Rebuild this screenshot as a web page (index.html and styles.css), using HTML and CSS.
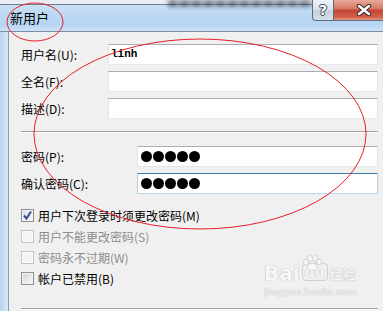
FILE: index.html
```html
<!DOCTYPE html>
<html lang="zh-CN">
<head>
    <meta charset="UTF-8">
    <title>新用户</title>
    <link rel="stylesheet" href="styles.css">
</head>
<body>
    <div class="window">
        <div class="titlebar">
            <div class="ghost"></div>
            <span class="title">新用户</span>
            <div class="caption-btns">
                <div class="cap help">?</div>
                <div class="cap close">
                    <svg width="18" height="12" viewBox="0 0 18 12">
                        <path d="M4 2 L14 10 M14 2 L4 10" stroke="#3b2a2a" stroke-width="4.5" stroke-linecap="round"/>
                        <path d="M4 2 L14 10 M14 2 L4 10" stroke="#fff" stroke-width="2.5" stroke-linecap="round"/>
                    </svg>
                </div>
            </div>
        </div>
        <div class="frame">
            <div class="side"></div>
            <div class="client">
                <div class="fields">
                    <label>用户名(U):</label>
                    <div class="field">linh</div>
                    <label>全名(F):</label>
                    <div class="field"></div>
                    <label>描述(D):</label>
                    <div class="field"></div>
                </div>
                <div class="sep"></div>
                <div class="fields pwd">
                    <label>密码(P):</label>
                    <div class="field"><span class="dot"></span><span class="dot"></span><span class="dot"></span><span class="dot"></span><span class="dot"></span></div>
                    <label>确认密码(C):</label>
                    <div class="field focus"><span class="dot"></span><span class="dot"></span><span class="dot"></span><span class="dot"></span><span class="dot"></span></div>
                </div>
                <ul class="checks">
                    <li><span class="box checked">
                        <svg width="11" height="11" viewBox="0 0 11 11"><path d="M2 5.5 L4.5 8.5 L9 1.5" fill="none" stroke="#3a4f8c" stroke-width="2"/></svg>
                    </span>用户下次登录时须更改密码(M)</li>
                    <li class="disabled"><span class="box"></span>用户不能更改密码(S)</li>
                    <li class="disabled"><span class="box"></span>密码永不过期(W)</li>
                    <li><span class="box"></span>帐户已禁用(B)</li>
                </ul>
                <div class="sep bottom"></div>
            </div>
        </div>

        <div class="watermark">
            <div class="wm-logo">
                <span class="wm-bai">Bai</span>
                <span class="wm-paw">
                    <svg width="20" height="16" viewBox="0 0 20 16">
                        <g fill="#f8f8f8" stroke="#d2d2d2" stroke-width="1">
                            <ellipse cx="4" cy="7" rx="2.5" ry="3"/>
                            <ellipse cx="8" cy="3.5" rx="2.5" ry="3"/>
                            <ellipse cx="13" cy="3.5" rx="2.5" ry="3"/>
                            <ellipse cx="17" cy="7" rx="2.5" ry="3"/>
                            <ellipse cx="10.5" cy="12" rx="4.5" ry="3.5"/>
                        </g>
                    </svg>
                </span>
                <span class="wm-du">du</span>
                <span class="wm-jy">经验</span>
            </div>
            <div class="wm-url">jingyan.baidu.com</div>
        </div>

        <svg class="marks" width="383" height="311" viewBox="0 0 383 311">
            <ellipse cx="35" cy="22" rx="28" ry="19" fill="none" stroke="#e61e28" stroke-width="1"/>
            <ellipse cx="200" cy="134" rx="166" ry="95" fill="none" stroke="#e61e28" stroke-width="1"/>
        </svg>
    </div>
</body>
</html>
```

FILE: styles.css
```css
body {
    margin: 0;
    font-family: "Noto Sans CJK SC", "Noto Sans", sans-serif;
    font-size: 12px;
    color: #000;
    background: #f0f0f0;
}
.window {
    position: relative;
    width: 383px;
    height: 311px;
    overflow: hidden;
    display: flex;
    flex-direction: column;
}
.titlebar {
    position: relative;
    height: 31px;
    display: flex;
    align-items: flex-start;
    background:
        linear-gradient(to bottom, #e9eef3 0 4px, #6d8097 4px 5px, transparent 5px),
        linear-gradient(to bottom, #d3e5f7 0%, #bdd9f4 45%, #b7d5f2 80%, #cfe2f6 100%);
    border-bottom: 1px solid #7b8da3;
}
/* blurred background seen through the glass */
.ghost {
    position: absolute;
    left: 168px;
    top: 0;
    width: 145px;
    height: 7px;
    background: repeating-linear-gradient(to right, #2a3440 0 9px, #8b97a4 9px 12px);
    filter: blur(2px);
    opacity: 0.6;
}
.title {
    position: relative;
    margin: 10px 0 0 10px;
    font-size: 13px;
    line-height: 16px;
}
.caption-btns {
    position: relative;
    display: flex;
    margin-left: auto;
    margin-right: -12px;
}
.cap {
    height: 20px;
    border: 1px solid #5d6e84;
    border-top: none;
    display: flex;
    align-items: center;
    justify-content: center;
}
.help {
    width: 20px;
    border-radius: 0 0 0 4px;
    background: linear-gradient(to bottom, #edf2f7 0%, #d9e2ec 50%, #c3d0df 51%, #d6e0ea 100%);
    font-family: "DejaVu Sans", sans-serif;
    font-weight: bold;
    font-size: 14px;
    color: #fff;
    text-shadow: 1px 0 0 #3d4a5a, -1px 0 0 #3d4a5a, 0 1px 0 #3d4a5a, 0 -1px 0 #3d4a5a;
    border-right: none;
}
.close {
    width: 60px;
    background: linear-gradient(to bottom, #e9a99c 0%, #d47763 45%, #c24533 50%, #d0604a 85%, #e69a86 100%);
    border-radius: 0 0 4px 0;
}
.frame {
    flex: 1;
    display: flex;
}
.side {
    width: 8px;
    background: linear-gradient(to right, #b9d3ed 0%, #c6dcf2 40%, #d8e7f6 100%);
}
.client {
    flex: 1;
    border-left: 1px solid #8a9cb1;
    padding: 12px 5px 0 12px;
}
.fields {
    display: grid;
    grid-template-columns: 87px 1fr;
    row-gap: 6px;
    align-items: center;
}
.fields.pwd {
    grid-template-columns: 116px 1fr;
    margin-top: 13px;
}
label {
    line-height: 21px;
    white-space: nowrap;
}
.field {
    height: 19px;
    background: #fff;
    border: 1px solid;
    border-color: #abadb3 #e2e3ea #e3e9ef #e2e3ea;
    padding-left: 2px;
    line-height: 19px;
    display: flex;
    align-items: center;
    font-family: "Liberation Mono", "DejaVu Sans Mono", monospace;
    font-weight: bold;
    font-size: 11px;
}
.field.focus {
    border-color: #3d7bad #b5cfe7 #b7d9ed #b5cfe7;
}
.pwd .field {
    padding-left: 3px;
}
.dot {
    width: 11px;
    height: 11px;
    border-radius: 50%;
    background: #000;
    margin-right: 1px;
    margin-top: -1px;
}
.sep {
    height: 1px;
    background: #a0a0a0;
    border-bottom: 1px solid #fff;
    margin-top: 12px;
}
.sep.bottom {
    margin-top: 19px;
}
.checks {
    list-style: none;
    margin: 11px 0 0;
    padding: 0;
}
.checks li {
    height: 21px;
    line-height: 21px;
    display: flex;
    align-items: center;
}
.box {
    width: 11px;
    height: 11px;
    border: 1px solid #8e8f8f;
    margin-right: 4px;
    background: linear-gradient(135deg, #d2d2d2 0%, #e9e9e9 60%, #f8f8f8 100%);
    box-shadow: inset 0 0 0 1px #f4f4f4;
    display: flex;
    align-items: center;
    justify-content: center;
}
.box.checked {
    background: linear-gradient(135deg, #d8dce3 0%, #eef0f4 60%, #fafafa 100%);
}
.disabled {
    color: #8d8d8d;
}
.disabled .box {
    border-color: #c4c4c4;
    background: #f4f4f4;
    box-shadow: inset 0 0 0 1px #fbfbfb;
}
.watermark {
    position: absolute;
    left: 264px;
    top: 254px;
    color: #f8f8f8;
    text-shadow: 0 0 1px #b8b8b8, 0 0 1px #b8b8b8;
}
.wm-logo {
    display: flex;
    align-items: flex-end;
    height: 30px;
}
.wm-bai {
    font-family: "DejaVu Sans", sans-serif;
    font-weight: bold;
    font-size: 20px;
    line-height: 22px;
}
.wm-paw {
    position: relative;
}
.wm-paw svg {
    position: absolute;
    left: 2px;
    top: -29px;
}
.wm-du {
    font-family: "DejaVu Sans", sans-serif;
    font-weight: bold;
    font-size: 14px;
    line-height: 16px;
    padding: 0 2px;
    border: 1px solid #cfcfcf;
    border-radius: 4px;
    margin: 0 2px 3px 2px;
}
.wm-jy {
    font-size: 13px;
    font-weight: bold;
    line-height: 20px;
}
.wm-url {
    font-family: "DejaVu Serif", serif;
    font-size: 10px;
    line-height: 12px;
    margin-top: 2px;
}
.marks {
    position: absolute;
    left: 0;
    top: 0;
    pointer-events: none;
}
```
